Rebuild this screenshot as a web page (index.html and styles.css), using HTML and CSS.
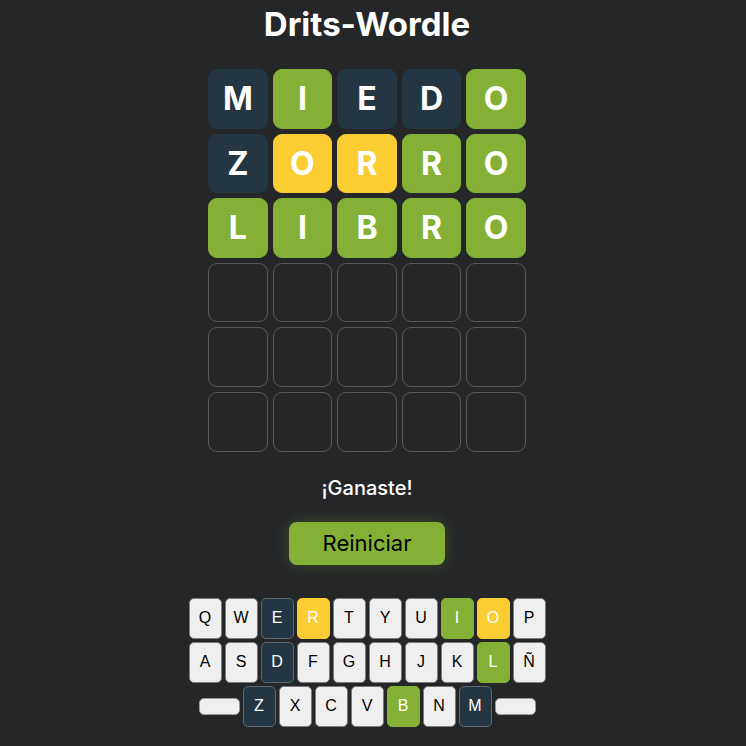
FILE: index.html
```html
<!DOCTYPE html>
<html lang="es">
<head>
<meta charset="utf-8">
<title>Drits-Wordle</title>
<link rel="stylesheet" href="styles.css">
</head>
<body>
<div class="app">
  <h1 class="title">Drits-Wordle</h1>
  <div class="board">
    <div class="tile absent">M</div><div class="tile correct">I</div><div class="tile absent">E</div><div class="tile absent">D</div><div class="tile correct">O</div>
    <div class="tile absent">Z</div><div class="tile present">O</div><div class="tile present">R</div><div class="tile correct">R</div><div class="tile correct">O</div>
    <div class="tile correct">L</div><div class="tile correct">I</div><div class="tile correct">B</div><div class="tile correct">R</div><div class="tile correct">O</div>
    <div class="tile"></div><div class="tile"></div><div class="tile"></div><div class="tile"></div><div class="tile"></div>
    <div class="tile"></div><div class="tile"></div><div class="tile"></div><div class="tile"></div><div class="tile"></div>
    <div class="tile"></div><div class="tile"></div><div class="tile"></div><div class="tile"></div><div class="tile"></div>
  </div>
  <p class="msg">¡Ganaste!</p>
  <button class="restart">Reiniciar</button>
  <div class="keyboard">
    <div class="krow">
      <button class="key">Q</button><button class="key">W</button><button class="key k-absent">E</button><button class="key k-present">R</button><button class="key">T</button><button class="key">Y</button><button class="key">U</button><button class="key k-correct">I</button><button class="key k-present">O</button><button class="key">P</button>
    </div>
    <div class="krow">
      <button class="key">A</button><button class="key">S</button><button class="key k-absent">D</button><button class="key">F</button><button class="key">G</button><button class="key">H</button><button class="key">J</button><button class="key">K</button><button class="key k-correct">L</button><button class="key">Ñ</button>
    </div>
    <div class="krow">
      <button class="key wide"></button><button class="key k-absent">Z</button><button class="key">X</button><button class="key">C</button><button class="key">V</button><button class="key k-correct">B</button><button class="key">N</button><button class="key k-absent">M</button><button class="key wide"></button>
    </div>
  </div>
</div>
</body>
</html>
```
FILE: styles.css
```css
html, body {
  margin: 0;
  padding: 0;
  background: #252628;
}
body {
  font-family: Inter, "Noto Sans", sans-serif;
  color: #ffffff;
}
.app {
  display: flex;
  flex-direction: column;
  align-items: center;
  padding-right: 12px;
}
.title {
  margin: 4px 0 25px;
  font-size: 33px;
  line-height: 40px;
  font-weight: 700;
}
.board {
  width: 318px;
  display: grid;
  grid-template-columns: repeat(5, 1fr);
  grid-auto-rows: 59.6px;
  gap: 5px;
}
.tile {
  box-sizing: border-box;
  border: 1px solid #58595b;
  border-radius: 9px;
  display: flex;
  align-items: center;
  justify-content: center;
  font-size: 32px;
  font-weight: 700;
  color: #ffffff;
}
.tile.absent { background: #243642; border-color: #243642; }
.tile.correct { background: #84b135; border-color: #84b135; }
.tile.present { background: #fbcd33; border-color: #fbcd33; }
.msg {
  margin: 24px 0 0;
  font-size: 20px;
  line-height: 24px;
  font-weight: 500;
}
.restart {
  margin-top: 22px;
  width: 156px;
  height: 43px;
  border: none;
  border-radius: 8px;
  background: #84b135;
  color: #000000;
  font-family: Inter, "Noto Sans", sans-serif;
  font-size: 22px;
  box-shadow: 0 0 16px rgba(132, 177, 53, 0.25);
}
.keyboard {
  margin-top: 33px;
  display: flex;
  flex-direction: column;
  gap: 3px;
}
.krow {
  display: flex;
  justify-content: center;
  align-items: center;
  gap: 3px;
}
.key {
  box-sizing: border-box;
  width: 33px;
  height: 41px;
  padding: 0;
  border: 1px solid #7a7a7a;
  border-radius: 5px;
  background: #efefef;
  color: #000000;
  font-family: "Liberation Sans", Arial, sans-serif;
  font-size: 16px;
}
.key.wide {
  width: 41px;
  height: 17px;
  border-color: #9a9a9a;
}
.key.k-absent { background: #243642; color: #ffffff; border-color: #5e6a72; }
.key.k-correct { background: #84b135; color: #ffffff; border-color: #84b135; }
.key.k-present { background: #fbcd33; color: #ffffff; border-color: #fbcd33; }
```
